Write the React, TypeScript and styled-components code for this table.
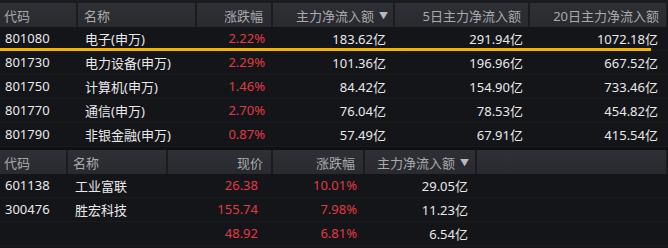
import React from "react";
import styled, { createGlobalStyle } from "styled-components";

const Global = createGlobalStyle`
  html, body { margin: 0; padding: 0; background: #141519; }
  body { font-family: "Noto Sans", "Noto Sans CJK SC", sans-serif; }
`;

const Screen = styled.div`
  width: 668px;
  height: 248px;
  background: #141519;
  overflow: hidden;
  display: flex;
  flex-direction: column;
`;

const TopStrip = styled.div`
  height: 3px;
  background: #1b1c20;
`;

const Gap = styled.div`
  height: 3px;
  background: #0e0f11;
`;

const Table = styled.div<{ $cols: string }>`
  display: grid;
  grid-template-columns: ${(p) => p.$cols};
`;

const HeadCell = styled.div<{ $right?: boolean; $pad: number }>`
  height: 24px;
  display: flex;
  align-items: center;
  justify-content: ${(p) => (p.$right ? "flex-end" : "flex-start")};
  padding: ${(p) => (p.$right ? `0 ${p.$pad}px 0 0` : `0 0 0 ${p.$pad}px`)};
  background: linear-gradient(#2e3035, #292a2f);
  border-right: 2px solid #1a1b1e;
  color: #a9aaad;
  font-size: 13px;
  white-space: nowrap;
  box-sizing: border-box;
  &:last-child { border-right: none; }
`;

const Arrow = styled.span`
  color: #b9babd;
  font-size: 9px;
  margin-left: 5px;
`;

const Row = styled.div`
  display: contents;
`;

const Cell = styled.div<{ $right?: boolean; $pad: number; $red?: boolean }>`
  position: relative;
  height: 24px;
  display: flex;
  align-items: center;
  justify-content: ${(p) => (p.$right ? "flex-end" : "flex-start")};
  padding: ${(p) => (p.$right ? `0 ${p.$pad}px 1px 0` : `0 0 1px ${p.$pad}px`)};
  color: ${(p) => (p.$red ? "#e33a42" : "#e9e9ea")};
  font-size: 13px;
  white-space: nowrap;
  box-sizing: border-box;
  border-bottom: 1px solid #1a1b1f;
`;

const Highlight = styled.div`
  position: absolute;
  left: 0;
  bottom: -1px;
  width: 651px;
  height: 3px;
  background: #f5b400;
  z-index: 2;
`;

type Col = { label: string; right?: boolean; hp: number; dp: number; sort?: boolean };

const topCols: Col[] = [
  { label: "代码", hp: 4, dp: 5 },
  { label: "名称", hp: 6, dp: 7 },
  { label: "涨跌幅", right: true, hp: 8, dp: 8 },
  { label: "主力净流入额", right: true, hp: 5, dp: 9, sort: true },
  { label: "5日主力净流入额", right: true, hp: 7, dp: 7 },
  { label: "20日主力净流入额", right: true, hp: 7, dp: 10 },
];

const topRows = [
  ["801080", "电子(申万)", "2.22%", "183.62亿", "291.94亿", "1072.18亿"],
  ["801730", "电力设备(申万)", "2.29%", "101.36亿", "196.96亿", "667.52亿"],
  ["801750", "计算机(申万)", "1.46%", "84.42亿", "154.90亿", "733.46亿"],
  ["801770", "通信(申万)", "2.70%", "76.04亿", "78.53亿", "454.82亿"],
  ["801790", "非银金融(申万)", "0.87%", "57.49亿", "67.91亿", "415.54亿"],
];

const botCols: Col[] = [
  { label: "代码", hp: 4, dp: 5 },
  { label: "名称", hp: 5, dp: 7 },
  { label: "现价", right: true, hp: 8, dp: 15 },
  { label: "涨跌幅", right: true, hp: 8, dp: 8 },
  { label: "主力净流入额", right: true, hp: 6, dp: 9, sort: true },
  { label: "", hp: 0, dp: 0 },
];

const botRows = [
  ["601138", "工业富联", "26.38", "10.01%", "29.05亿", ""],
  ["300476", "胜宏科技", "155.74", "7.98%", "11.23亿", ""],
  ["", "", "48.92", "6.81%", "6.54亿", ""],
];

function DataTable({
  cols,
  rows,
  template,
  redCols,
  highlightRow,
}: {
  cols: Col[];
  rows: string[][];
  template: string;
  redCols: number[];
  highlightRow?: number;
}) {
  return (
    <Table $cols={template}>
      {cols.map((c, i) => (
        <HeadCell key={i} $right={c.right} $pad={c.hp}>
          {c.label}
          {c.sort && <Arrow>▼</Arrow>}
        </HeadCell>
      ))}
      {rows.map((r, ri) => (
        <Row key={ri}>
          {r.map((v, ci) => (
            <Cell key={ci} $right={cols[ci].right} $pad={cols[ci].dp} $red={redCols.includes(ci)}>
              {v}
              {highlightRow === ri && ci === 0 && <Highlight />}
            </Cell>
          ))}
        </Row>
      ))}
    </Table>
  );
}

export default function App() {
  return (
    <>
      <Global />
      <Screen>
        <TopStrip />
        <DataTable
          cols={topCols}
          rows={topRows}
          template="78px 119px 76px 122px 135px 1fr"
          redCols={[2]}
          highlightRow={0}
        />
        <Gap />
        <DataTable
          cols={botCols}
          rows={botRows}
          template="68px 100px 105px 92px 112px 1fr"
          redCols={[2, 3]}
        />
      </Screen>
    </>
  );
}
